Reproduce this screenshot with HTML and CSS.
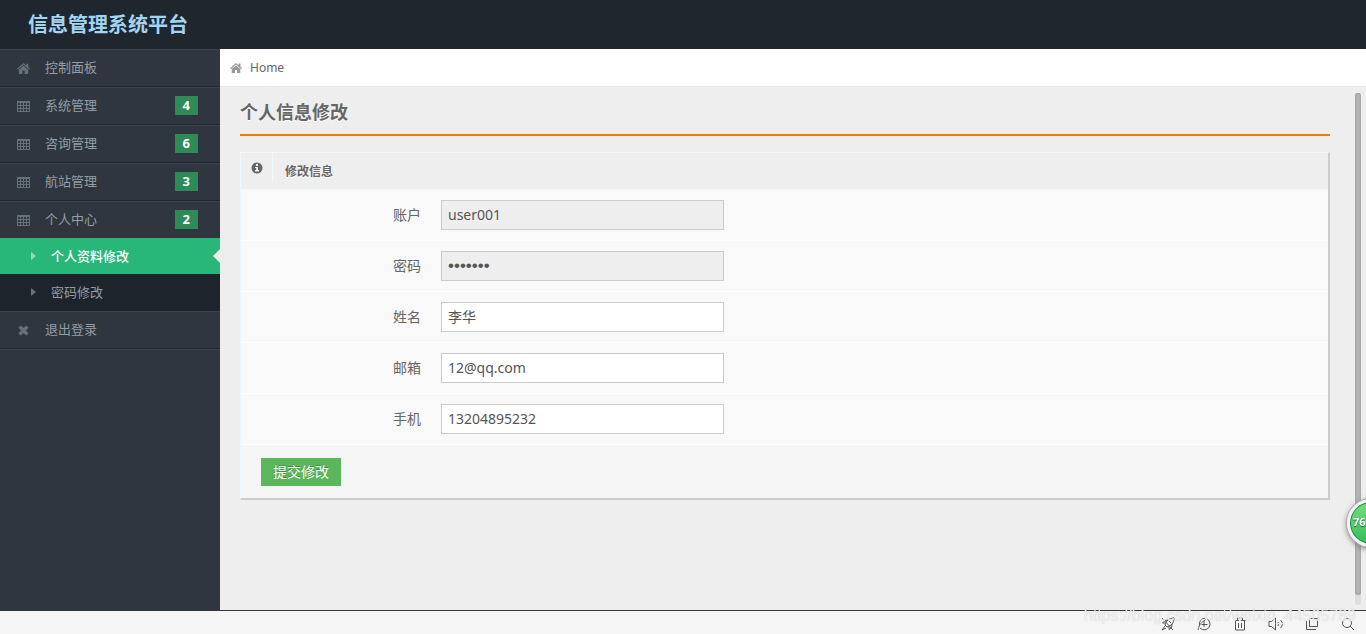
FILE: index.html
```html
<!DOCTYPE html>
<html lang="zh-CN">
<head>
<meta charset="utf-8">
<meta name="viewport" content="width=device-width, initial-scale=1">
<title>信息管理系统平台</title>
<link rel="stylesheet" href="styles.css">
</head>
<body>
<svg class="sprite" aria-hidden="true">
  <symbol id="i-home" viewBox="0 0 12 10"><path d="M6 0 0 5.300l.7.9L6 1.600l5.300 4.600.7-.9-1.500-1.300V.6H8.600v1.700zM6 2.400 1.700 6.100V10h3.300V7h2v3h3.300V6.100z"/></symbol>
  <symbol id="i-table" viewBox="0 0 13 11"><path fill-rule="evenodd" d="M0 0h13v11H0zM1 2v2h2V2zm3 0v2h2V2zm3 0v2h2V2zm3 0v2h2V2zM1 5v2h2V5zm3 0v2h2V5zm3 0v2h2V5zm3 0v2h2V5zM1 8v2h2V8zm3 0v2h2V8zm3 0v2h2V8zm3 0v2h2V8z"/></symbol>
  <symbol id="i-times" viewBox="0 0 12 10"><path d="M3.500.3 6 2.800 8.500.3l2.200 2.200L8.200 5l2.500 2.500-2.200 2.200L6 7.200 3.500 9.700 1.300 7.500 3.800 5 1.300 2.500z"/></symbol>
</svg>

<header class="header"><h1 class="brand">信息管理系统平台</h1></header>

<div class="layout">
  <nav class="sidebar" aria-label="主菜单">
    <ul class="menu">
      <li class="menu-item"><a class="menu-link" href="#"><svg class="menu-icon"><use href="#i-home"/></svg><span class="menu-text">控制面板</span></a></li>
      <li class="menu-item"><a class="menu-link" href="#"><svg class="menu-icon"><use href="#i-table"/></svg><span class="menu-text">系统管理</span><span class="count">4</span></a></li>
      <li class="menu-item"><a class="menu-link" href="#"><svg class="menu-icon"><use href="#i-table"/></svg><span class="menu-text">咨询管理</span><span class="count">6</span></a></li>
      <li class="menu-item"><a class="menu-link" href="#"><svg class="menu-icon"><use href="#i-table"/></svg><span class="menu-text">航站管理</span><span class="count">3</span></a></li>
      <li class="menu-item"><a class="menu-link" href="#"><svg class="menu-icon"><use href="#i-table"/></svg><span class="menu-text">个人中心</span><span class="count">2</span></a>
        <ul class="submenu">
          <li><a class="submenu-link active" href="#" aria-current="page">个人资料修改</a></li>
          <li><a class="submenu-link" href="#">密码修改</a></li>
        </ul>
      </li>
      <li class="menu-item"><a class="menu-link" href="#"><svg class="menu-icon"><use href="#i-times"/></svg><span class="menu-text">退出登录</span></a></li>
    </ul>
  </nav>

  <main class="main">
    <nav class="breadcrumb" aria-label="位置"><a class="crumb" href="#"><svg class="crumb-icon"><use href="#i-home"/></svg>Home</a></nav>
    <div class="content">
      <h2 class="page-title">个人信息修改</h2>
      <form class="panel">
        <div class="panel-head">
          <span class="panel-icon"><svg class="info" viewBox="0 0 12 12"><circle cx="6" cy="6" r="5.500" fill="#666"/><path fill="#eee" d="M5 2h2v2H5zM4 5h3v3h1v1.500H4V8h1V6H4z"/></svg></span>
          <h3 class="panel-title">修改信息</h3>
        </div>
        <div class="row"><label class="label" for="account">账户</label><input class="field" id="account" type="text" value="user001" readonly></div>
        <div class="row"><label class="label" for="password">密码</label><input class="field" id="password" type="password" value="user001" readonly></div>
        <div class="row"><label class="label" for="name">姓名</label><input class="field" id="name" type="text" value="李华"></div>
        <div class="row"><label class="label" for="email">邮箱</label><input class="field" id="email" type="text" value="12@qq.com"></div>
        <div class="row"><label class="label" for="phone">手机</label><input class="field" id="phone" type="text" value="13204895232"></div>
        <div class="actions"><button class="submit" type="submit">提交修改</button></div>
      </form>
    </div>
    <div class="scroll-track"><div class="scroll-thumb"></div></div>
  </main>
</div>

<footer class="statusbar">
  <button class="tool" type="button" aria-label="加速"><svg viewBox="0 0 14 14"><path d="M4 8c1-4 4-7 9-7 0 5-3 8-7 9zM4 6H1.500L4 3.500l3-.500M8 10v2.500l2.500-2 .5-3.500M4 9l-3 4 4-2M8 4l2 2M1 1l11 12"/></svg></button>
  <button class="tool" type="button" aria-label="下载"><svg viewBox="0 0 14 14"><path d="M9 1.500A5.800 5.800 0 1 1 3 11M2.500 8.500A5.800 5.800 0 0 1 8 1.200M1 13c1-4 2-7 6-9v6M4.500 7.500h6M7 4l1.500-1.500"/></svg></button>
  <button class="tool" type="button" aria-label="清理"><svg viewBox="0 0 14 14"><path d="M1 3.500h12M4.500 3V1h5v2M2.500 4v9h9V4M5.500 6v5M8.500 6v5"/></svg></button>
  <button class="tool" type="button" aria-label="声音"><svg viewBox="0 0 16 14"><path d="M1 4.500h2.500L7.500 1v12L3.500 9.500H1zM10 5q1.500 2 0 4M12.500 3q4 4 0 8"/></svg></button>
  <button class="tool" type="button" aria-label="窗口"><svg viewBox="0 0 14 14"><path d="M4.500 1.500h8v8h-8zM1.500 4v8.500H11"/></svg></button>
  <button class="tool" type="button" aria-label="搜索"><svg viewBox="0 0 14 14"><circle cx="6" cy="6" r="4.500"/><path d="m9 9 4 4"/></svg></button>
</footer>
<span class="watermark">https://blog.csdn.net/weixin_44505789</span>
<div class="meter-clip"><div class="meter">76</div></div>
</body>
</html>
```
FILE: styles.css
```css
* { box-sizing: border-box; }

body {
  margin: 0;
  min-height: 100vh;
  display: flex;
  flex-direction: column;
  background: #2f363f;
  color: #666;
  font: 13px/20px "Noto Sans", "Noto Sans CJK SC", sans-serif;
}

a { color: inherit; text-decoration: none; }
ul { margin: 0; padding: 0; list-style: none; }
h1, h2, h3 { margin: 0; }
.sprite { position: absolute; width: 0; height: 0; }

.header { height: 49px; padding: 0 28px; background: #1f262d; display: flex; align-items: center; }
.brand { color: #a2d4f4; font-size: 20px; line-height: 28px; }

.layout { flex: 1; display: flex; }
.sidebar { width: 220px; flex: none; }
.menu-item { border-top: 1px solid #3a434d; border-bottom: 1px solid #1f262d; color: #939da8; }
.menu-item:last-child { box-shadow: 0 1px #3a434d; }
.menu-link { display: flex; align-items: center; height: 36px; padding: 0 22px 2px 17px; }
.menu-icon { width: 13px; height: 11px; margin: 2px 15px 0 0; fill: #66707b; }
.menu-text { flex: 1; }
.count { padding: 0 8px; background: #2e8b57; color: #fff; font-weight: bold; line-height: 19px; }

.submenu { background: #1e242b; }
.submenu-link { position: relative; display: flex; align-items: center; gap: 15px; height: 36px; padding-left: 31px; }
.submenu-link::before { content: ""; border: 4px solid transparent; border-left: 5px solid #69727c; border-right: 0; }
.submenu-link.active { background: #28b779; color: #fff; font-weight: 500; }
.submenu-link.active::before { border-left-color: #93dbbc; }
.submenu-link.active::after {
  content: "";
  position: absolute;
  right: 0;
  top: 11px;
  border: 7px solid transparent;
  border-right-color: #eee;
  border-left: 0;
}

.main { position: relative; flex: 1; min-width: 0; background: #eee; border-bottom: 1px solid #2f363f; }
.breadcrumb { height: 38px; padding: 0 10px; background: #fff; border-bottom: 1px solid #e3ebe8; display: flex; align-items: center; font-size: 12px; }
.crumb { display: flex; align-items: center; gap: 8px; }
.crumb-icon { width: 12px; height: 10px; fill: #999; }
.content { padding: 10px 36px 20px 20px; }
.page-title { padding-bottom: 7px; border-bottom: 2px solid #ef7c00; font-size: 18px; line-height: 30px; text-shadow: 0 1px #fff; }

.panel { margin-top: 16px; background: #f9f9f9; border: 1px solid #f0f8ff; border-right: 2px solid #ccc; border-bottom: 2px solid #ccc; }
.panel-head { display: flex; align-items: flex-start; height: 37px; background: #eee; border-bottom: 1px solid #f0f8ff; }
.panel-icon { display: flex; width: 32px; height: 29px; padding: 9px 9px 8px 10px; border-right: 1px solid #f0f8ff; }
.info { width: 12px; height: 12px; }
.panel-title { padding: 9px 12px 7px; font-size: 12px; text-shadow: 0 1px #fff; }

.row { display: flex; align-items: center; gap: 20px; padding: 10px 0; border-bottom: 1px solid #fff; font-size: 14px; }
.label { width: 180px; text-align: right; }
.field { width: 26%; height: 30px; padding: 3px 6px 5px; border: 1px solid #ccc; border-radius: 0; background: #fff; color: #555; font: inherit; }
.field:read-only { background: #eee; }
.field[type="password"] { padding: 4px 6px; font-family: "Liberation Sans", sans-serif; font-size: 17px; }

.actions { padding: 13px 20px 12px; background: #f5f5f5; }
.submit { display: block; height: 28px; padding: 0 12px 2px; border: 0; background: #5bb75b; color: #fff; font: 14px/26px "Noto Sans CJK SC", sans-serif; text-shadow: 0 -1px rgba(0, 0, 0, .25); }

.scroll-track { position: absolute; top: 44px; right: 5px; bottom: 5px; width: 6px; border-radius: 3px; background: #ddd; }
.scroll-thumb { height: 98%; border-radius: 3px; background: #b3b3b3; box-shadow: inset 0 0 2px #888; }

.statusbar { display: flex; justify-content: flex-end; align-items: center; gap: 20px; height: 23px; padding: 2px 10px 0; background: #f5f5f5; }
.tool { width: 16px; height: 14px; padding: 0; border: 0; background: none; }
.tool svg { display: block; width: 100%; height: 100%; fill: none; stroke: #555; }
.watermark { position: fixed; right: 10px; bottom: 8px; color: rgba(255, 255, 255, .7); font: 16px/20px "Liberation Sans", sans-serif; text-shadow: 0 0 1px #bbb; pointer-events: none; }

.meter-clip { position: fixed; right: 0; bottom: 80px; width: 28px; height: 62px; overflow: hidden; pointer-events: none; }
.meter {
  width: 48px;
  height: 48px;
  margin: 7px 0 0 9px;
  padding-left: 3px;
  border: 3px solid #f3f3f3;
  border-radius: 50%;
  background: linear-gradient(#76dd7d, #35bd58);
  box-shadow: inset 0 0 0 1px #198452, 0 0 0 1px #aaa, 0 2px 6px #777;
  color: #fff;
  font: bold 11px/40px "Noto Sans", sans-serif;
  text-shadow: 0 1px 1px #176538;
}
```
